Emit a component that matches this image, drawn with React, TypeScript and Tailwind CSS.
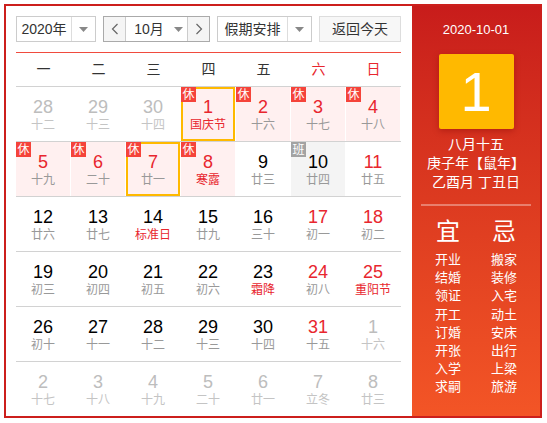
import React from "react";

type Day = {
  n: number;
  lunar: string;
  tone?: "red" | "grey"; // number colour
  lunarRed?: boolean;
  tag?: "休" | "班";
  ring?: boolean;
};

const rows: Day[][] = [
  [
    { n: 28, lunar: "十二", tone: "grey" },
    { n: 29, lunar: "十三", tone: "grey" },
    { n: 30, lunar: "十四", tone: "grey" },
    { n: 1, lunar: "国庆节", tone: "red", lunarRed: true, tag: "休", ring: true },
    { n: 2, lunar: "十六", tone: "red", tag: "休" },
    { n: 3, lunar: "十七", tone: "red", tag: "休" },
    { n: 4, lunar: "十八", tone: "red", tag: "休" },
  ],
  [
    { n: 5, lunar: "十九", tone: "red", tag: "休" },
    { n: 6, lunar: "二十", tone: "red", tag: "休" },
    { n: 7, lunar: "廿一", tone: "red", tag: "休", ring: true },
    { n: 8, lunar: "寒露", tone: "red", lunarRed: true, tag: "休" },
    { n: 9, lunar: "廿三" },
    { n: 10, lunar: "廿四", tag: "班" },
    { n: 11, lunar: "廿五", tone: "red" },
  ],
  [
    { n: 12, lunar: "廿六" },
    { n: 13, lunar: "廿七" },
    { n: 14, lunar: "标准日", lunarRed: true },
    { n: 15, lunar: "廿九" },
    { n: 16, lunar: "三十" },
    { n: 17, lunar: "初一", tone: "red" },
    { n: 18, lunar: "初二", tone: "red" },
  ],
  [
    { n: 19, lunar: "初三" },
    { n: 20, lunar: "初四" },
    { n: 21, lunar: "初五" },
    { n: 22, lunar: "初六" },
    { n: 23, lunar: "霜降", lunarRed: true },
    { n: 24, lunar: "初八", tone: "red" },
    { n: 25, lunar: "重阳节", tone: "red", lunarRed: true },
  ],
  [
    { n: 26, lunar: "初十" },
    { n: 27, lunar: "十一" },
    { n: 28, lunar: "十二" },
    { n: 29, lunar: "十三" },
    { n: 30, lunar: "十四" },
    { n: 31, lunar: "十五", tone: "red" },
    { n: 1, lunar: "十六", tone: "grey" },
  ],
  [
    { n: 2, lunar: "十七", tone: "grey" },
    { n: 3, lunar: "十八", tone: "grey" },
    { n: 4, lunar: "十九", tone: "grey" },
    { n: 5, lunar: "二十", tone: "grey" },
    { n: 6, lunar: "廿一", tone: "grey" },
    { n: 7, lunar: "立冬", tone: "grey" },
    { n: 8, lunar: "廿三", tone: "grey" },
  ],
];

const weekdays = ["一", "二", "三", "四", "五", "六", "日"];
const good = ["开业", "结婚", "领证", "开工", "订婚", "开张", "入学", "求嗣"];
const bad = ["搬家", "装修", "入宅", "动土", "安床", "出行", "上梁", "旅游"];

const Caret = () => (
  <svg width="9" height="5" viewBox="0 0 9 5">
    <path d="M0 0h9L4.5 5z" fill="#888" />
  </svg>
);

const Chevron = ({ right }: { right?: boolean }) => (
  <svg width="8" height="12" viewBox="0 0 8 12">
    <path
      d={right ? "M1.5 1l5 5-5 5" : "M6.5 1l-5 5 5 5"}
      fill="none"
      stroke="#666"
      strokeWidth="1.2"
    />
  </svg>
);

function Cell({ d }: { d: Day }) {
  const bg =
    d.tag === "休" ? "bg-[#fff0f0]" : d.tag === "班" ? "bg-[#f4f4f4]" : "bg-white";
  const num =
    d.tone === "grey" ? "text-[#bdbdbd]" : d.tone === "red" ? "text-[#e8262e]" : "text-black";
  const lunar = d.lunarRed
    ? "text-[#e8262e]"
    : d.tone === "grey"
      ? "text-[#c4c4c4]"
      : "text-[#999]";
  return (
    <div className="pr-px">
      <div className={`relative h-[54px] ${bg} flex flex-col items-center pt-[10px]`}>
        {d.ring && <div className="absolute inset-0 border-2 border-[#ffb900]" />}
        {d.tag && (
          <div
            className={`absolute left-0 top-0 w-[15px] h-[15px] flex items-center justify-center text-[12px] leading-none text-white ${
              d.tag === "休" ? "bg-[#f5433a]" : "bg-[#a3a3a3]"
            }`}
          >
            {d.tag}
          </div>
        )}
        <div className={`text-[18px] leading-[20px] ${num}`}>{d.n}</div>
        <div className={`text-[12px] leading-[17px] ${lunar}`}>{d.lunar}</div>
      </div>
    </div>
  );
}

export default function App() {
  return (
    <div
      className="ml-1 mt-1 w-[538px] h-[414px] border-2 border-[#cc1f1c] flex text-[#333]"
      style={{ fontFamily: '"Liberation Sans", "Noto Sans CJK SC", sans-serif' }}
    >
      {/* left: calendar */}
      <div className="w-[406px] bg-white pt-[10px] pl-[10px] pr-[11px]">
        <div className="flex h-[26px] gap-[7px] text-[14px]">
          <div className="w-[80px] flex border border-[#ccc]">
            <div className="flex-1 flex items-center justify-center">2020年</div>
            <div className="w-[24px] border-l border-[#ddd] flex items-center justify-center">
              <Caret />
            </div>
          </div>
          <div className="w-[107px] flex border border-[#aaa]">
            <div className="w-[22px] bg-[#f5f5f5] border-r border-[#ccc] flex items-center justify-center">
              <Chevron />
            </div>
            <div className="flex-1 flex items-center justify-center gap-[10px] pl-[4px]">
              <span>10月</span>
              <Caret />
            </div>
            <div className="w-[22px] bg-[#f5f5f5] border-l border-[#ccc] flex items-center justify-center">
              <Chevron right />
            </div>
          </div>
          <div className="w-[95px] flex border border-[#ccc]">
            <div className="flex-1 flex items-center justify-center">假期安排</div>
            <div className="w-[24px] border-l border-[#ddd] flex items-center justify-center">
              <Caret />
            </div>
          </div>
          <div className="w-[82px] border border-[#ddd] bg-[#f7f7f7] flex items-center justify-center">
            返回今天
          </div>
        </div>
        <div className="mt-[10px] h-px bg-[#f04b3e]" />
        <div className="grid grid-cols-7 h-[33px] items-center text-center text-[14px]">
          {weekdays.map((w, i) => (
            <div key={w} className={i >= 5 ? "text-[#e8262e]" : "text-[#333]"}>
              {w}
            </div>
          ))}
        </div>
        {rows.map((r, i) => (
          <div key={i} className="grid grid-cols-7 border-t border-[#d2d2d2]">
            {r.map((d, j) => (
              <Cell key={j} d={d} />
            ))}
          </div>
        ))}
      </div>

      {/* right: day detail */}
      <div className="flex-1 bg-linear-to-b from-[#c81c1b] to-[#f35526] text-white flex flex-col items-center">
        <div className="mt-[16px] text-[13px] leading-[16px]">2020-10-01</div>
        <div className="mt-[16px] w-[75px] h-[75px] rounded-[2px] bg-[#ffb900] shadow-[0_2px_6px_rgba(120,0,0,0.35)] flex items-center justify-center text-[56px] leading-none">
          1
        </div>
        <div className="mt-[6px] text-[14px] leading-[19px] text-center">
          <div>八月十五</div>
          <div>庚子年【鼠年】</div>
          <div>乙酉月 丁丑日</div>
        </div>
        <div className="mt-[12px] w-[110px] h-[2px] bg-white/35" />
        <div className="mt-[12px] w-[112px] grid grid-cols-2 text-center">
          <div className="text-[24px] leading-[28px]">宜</div>
          <div className="text-[24px] leading-[28px]">忌</div>
          <div className="mt-[5px] text-[13px] leading-[18.2px]">
            {good.map((g) => (
              <div key={g}>{g}</div>
            ))}
          </div>
          <div className="mt-[5px] text-[13px] leading-[18.2px]">
            {bad.map((b) => (
              <div key={b}>{b}</div>
            ))}
          </div>
        </div>
      </div>
    </div>
  );
}
